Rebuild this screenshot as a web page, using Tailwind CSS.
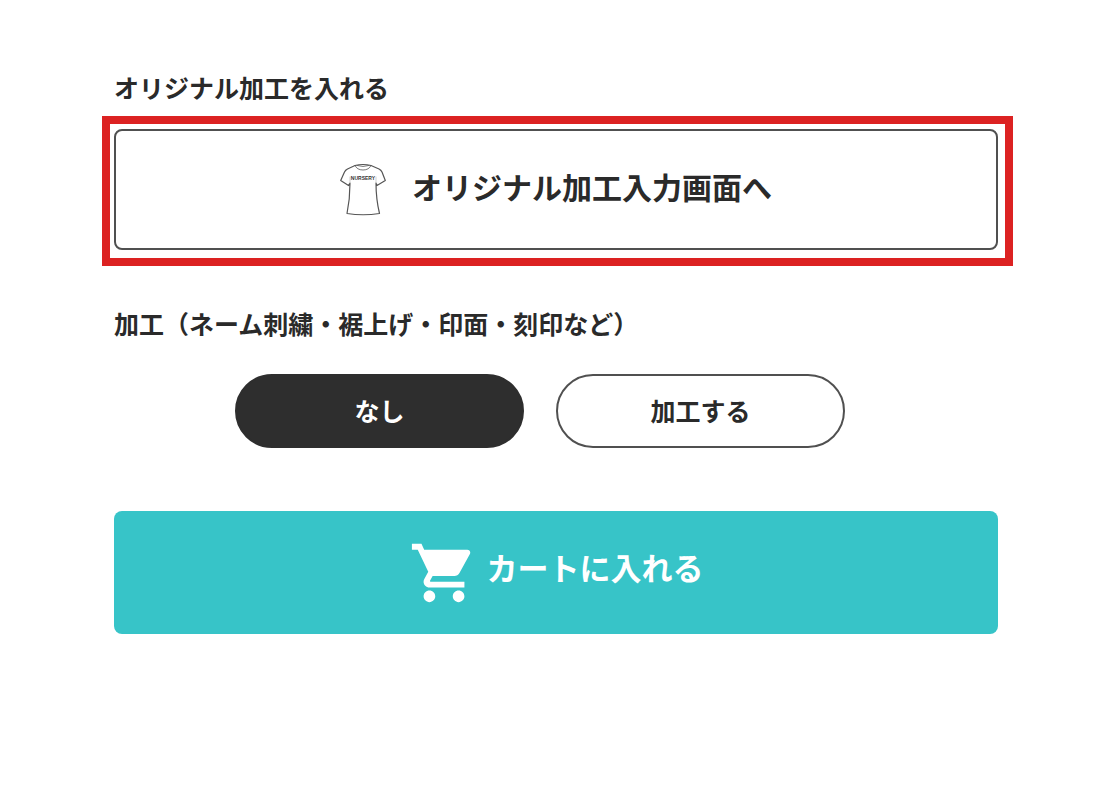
<!DOCTYPE html>
<html lang="ja">
<head>
  <meta charset="UTF-8" />
  <meta name="viewport" content="width=device-width, initial-scale=1" />
  <title>オリジナル加工</title>
  <script src="https://cdn.jsdelivr.net/npm/@tailwindcss/browser@4"></script>
</head>
<body class="bg-white text-[#2a2a2a] font-['Noto_Sans_CJK_JP',sans-serif] font-bold">

  <form class="pt-[69px] pl-[114px] pr-[122px]">

    <!-- Original print -->
    <h2 class="text-[25px] leading-9">オリジナル加工を入れる</h2>
    <div class="mt-[11px] -ml-3 -mr-[15px] border-8 border-[#dc2222] pt-[5px] pb-2 pl-1 pr-[7px]">
      <button type="button" class="flex w-full h-[121px] items-center justify-center gap-[26px] rounded-lg border-2 border-[#505050] bg-white text-[30px] leading-9">
        <svg class="w-[46px] h-[54px]" viewBox="0 0 46 54" fill="none" stroke="#555" stroke-width="1.2" stroke-linejoin="round" stroke-linecap="round" aria-hidden="true">
          <path d="M15 2.5 Q23 .5 31 2.5 L39 6 Q41 7 42 9 L45.3 17.5 L37 22.5 L36 20 Q36 36 39.5 50.500 Q23 53 7 50.5 Q10 36 10 20 L8.5 22.5 L.7 17.5 L4.5 9 Q5.5 7 7.5 6 Z" />
          <path d="M15 2.5 Q17 7 23 7 Q29 7 31 2.5 M17 2.5 Q23 4.5 29 2.5" stroke-width=".8" />
          <path d="M10 20 V14 M36 20 V14" stroke="#bbb" stroke-width=".7" />
          <text x="23" y="17" text-anchor="middle" font-family="Liberation Sans" font-size="5" font-weight="700" fill="#333" stroke="none">NURSERY</text>
        </svg>
        <span class="pb-2">オリジナル加工入力画面へ</span>
      </button>
    </div>

    <!-- Name embroidery, hemming etc. -->
    <fieldset class="mt-[39px]">
      <legend class="text-[25px] leading-9">加工（ネーム刺繍・裾上げ・印面・刻印など）</legend>
      <div class="mt-[33px] flex justify-center text-[25px] leading-9">
        <label class="mr-8 flex w-[289px] h-[74px] items-center justify-center rounded-full border-2 border-[#505050] pb-[2px] cursor-pointer has-checked:border-[#2e2e2e] has-checked:bg-[#2e2e2e] has-checked:text-white">
          <input type="radio" name="processing" value="none" class="sr-only" checked />
          なし
        </label>
        <label class="mr-8 flex w-[289px] h-[74px] items-center justify-center rounded-full border-2 border-[#505050] pb-[2px] cursor-pointer has-checked:border-[#2e2e2e] has-checked:bg-[#2e2e2e] has-checked:text-white">
          <input type="radio" name="processing" value="custom" class="sr-only" />
          加工する
        </label>
      </div>
    </fieldset>

    <!-- Add to cart -->
    <button type="submit" class="mt-[63px] flex w-full h-[123px] items-center justify-center gap-2 rounded-lg bg-[#37c4c8] text-[31px] leading-9 text-white">
      <svg class="w-[70px] h-[70px]" viewBox="0 0 24 24" fill="currentColor" aria-hidden="true">
        <path d="M7 18c-1.1 0-1.99.9-1.99 2S5.9 22 7 22s2-.9 2-2-.9-2-2-2zM1 2v2h2l3.6 7.59-1.35 2.45c-.16.28-.25.61-.25.96 0 1.1.9 2 2 2h12v-2H7.42c-.14 0-.25-.11-.25-.25l.03-.12.9-1.63h7.45c.75 0 1.41-.41 1.75-1.03l3.58-6.49c.08-.14.12-.31.12-.48 0-.55-.45-1-1-1H5.21l-.94-2H1zm16 16c-1.1 0-1.99.9-1.99 2s.89 2 1.99 2 2-.9 2-2-.9-2-2-2z" />
      </svg>
      <span class="pb-3">カートに入れる</span>
    </button>

  </form>

</body>
</html>
